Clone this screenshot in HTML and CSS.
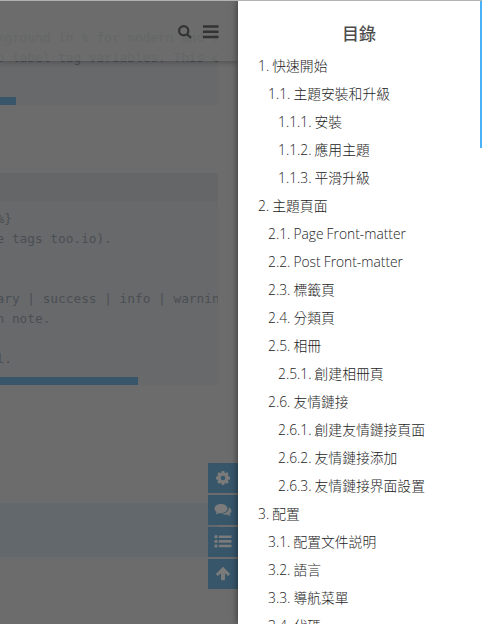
FILE: index.html
```html
<!DOCTYPE html>
<html lang="zh-Hant">
<head>
<meta charset="utf-8">
<title>目錄</title>
<link rel="stylesheet" href="styles.css">
</head>
<body>
<div class="app">
  <main class="page">
    <div class="code code-top">
      <pre>kground in % for modern and f
b label tag variables. This c</pre>
      <span class="scroll scroll-short"></span>
    </div>
    <section class="snippet">
      <div class="snippet-head"></div>
      <div class="code">
        <pre>%}
e tags too.io).


ary | success | info | warnin
n note.

l.</pre>
        <span class="scroll scroll-long"></span>
      </div>
    </section>
    <div class="quote"></div>
    <header class="nav">
      <svg class="search" viewBox="0 0 14 14"><circle cx="5.7" cy="5.7" r="4.6"/><path d="M9 9l4 4"/></svg>
      <svg class="bars" viewBox="0 0 16 14"><path d="M0 1.500h15.500M0 6.800h15.500M0 12h15.500"/></svg>
    </header>
    <div class="tools">
      <div class="tool"><svg viewBox="0 0 16 16"><circle cx="8" cy="8" r="4" fill="none" stroke="currentColor" stroke-width="3.4"/><path d="M8 1v3M8 12v3M1 8h3M12 8h3M3.100 3.100l2 2M10.900 10.900l2 2M12.900 3.100l-2 2M5.100 10.900l-2 2" stroke="currentColor" stroke-width="2.8"/></svg></div>
      <div class="tool"><svg class="wide" viewBox="0 0 18 16"><path d="M7 2c3.700 0 6.400 2 6.400 4.600S10.700 11.200 7 11.200c-.7 0-1.300-.1-1.900-.2C4 11.800 2.700 12.200 1.300 12.300c.7-.7 1.100-1.300 1.300-2.200C1.200 9.200.5 8 .5 6.600.5 4 3.300 2 7 2z"/><path d="M14.500 5.200c1.800.7 2.900 2 2.900 3.500 0 1.200-.7 2.300-1.900 3 .2.900.6 1.500 1.300 2.200-1.500-.1-2.700-.5-3.800-1.300-2.200.4-4.200 0-5.600-1 4 .2 7.200-1.900 7.200-5 0-.5 0-.9-.1-1.400z"/></svg></div>
      <div class="tool"><svg class="wide" viewBox="0 0 18 16"><path d="M4.800 1.500h12.700v2.600H4.800zM4.800 6.100h12.700v2.600H4.800zM4.800 10.700h12.700v2.600H4.800z"/><circle cx="2" cy="2.800" r="1.700"/><circle cx="2" cy="7.400" r="1.700"/><circle cx="2" cy="12" r="1.700"/></svg></div>
      <div class="tool"><svg viewBox="0 0 16 16"><path d="M8 .8l7.200 7.200-2 2-3.200-2.800V13.200q0 1-1 1H7q-1 0-1-1V7.200L2.800 10l-2-2z"/></svg></div>
    </div>
  </main>
  <aside class="toc">
    <h1 class="toc-title">目錄</h1>
    <ol class="toc-list">
      <li>1. 快速開始</li>
      <li class="l2">1.1. 主題安裝和升級</li>
      <li class="l3">1.1.1. 安裝</li>
      <li class="l3">1.1.2. 應用主題</li>
      <li class="l3">1.1.3. 平滑升級</li>
      <li>2. 主題頁面</li>
      <li class="l2">2.1. Page Front-matter</li>
      <li class="l2">2.2. Post Front-matter</li>
      <li class="l2">2.3. 標籤頁</li>
      <li class="l2">2.4. 分類頁</li>
      <li class="l2">2.5. 相冊</li>
      <li class="l3">2.5.1. 創建相冊頁</li>
      <li class="l2">2.6. 友情鏈接</li>
      <li class="l3">2.6.1. 創建友情鏈接頁面</li>
      <li class="l3">2.6.2. 友情鏈接添加</li>
      <li class="l3">2.6.3. 友情鏈接界面設置</li>
      <li>3. 配置</li>
      <li class="l2">3.1. 配置文件説明</li>
      <li class="l2">3.2. 語言</li>
      <li class="l2">3.3. 導航菜單</li>
      <li class="l2">3.4. 代碼</li>
    </ol>
    <div class="progress"></div>
  </aside>
</div>
</body>
</html>
```
FILE: styles.css
```css
* { box-sizing: border-box; }
body { margin: 0; }
.app {
  display: flex;
  width: 482px;
  height: 624px;
  overflow: hidden;
  border-top: 1px solid #b2b2b2;
  font-family: "Open Sans", "Noto Sans CJK TC", sans-serif;
}
.page {
  position: relative;
  width: 238px;
  height: 623px;
  padding-right: 20px;
  overflow: hidden;
  background: #6c6c6c;
}
.code {
  position: relative;
  height: 184px;
  padding-top: 8px;
  overflow: hidden;
  background: #68696b;
  color: #4a4f53;
}
.code pre {
  margin: 0 0 0 -3.5px;
  font: 12.79px/20px "DejaVu Sans Mono", monospace;
}
.code-top { height: 104px; padding-top: 27px; }
.scroll {
  position: absolute;
  left: 0;
  bottom: 0;
  height: 8px;
  background: #37566a;
}
.scroll-short { width: 16px; }
.scroll-long { width: 138px; }
.snippet { margin-top: 68px; }
.snippet-head { height: 28px; background: #656667; }
.quote { height: 54px; margin-top: 118px; background: #63686c; }
.nav {
  position: absolute;
  top: 0;
  left: 0;
  width: 238px;
  height: 60px;
  padding: 23px 20px 0 0;
  display: flex;
  justify-content: flex-end;
  gap: 11px;
  background: rgba(107, 109, 107, .8);
  box-shadow: 0 2px 5px rgba(0, 0, 0, .22);
}
.nav svg { fill: none; stroke: #333; }
.search { width: 14px; height: 14px; margin-top: 1px; stroke-width: 2.2; }
.bars { width: 16px; height: 14px; margin: 1px -1px 0 0; stroke-width: 2.6; }
.tools {
  position: absolute;
  right: 0;
  bottom: 35px;
  display: flex;
  flex-direction: column;
  gap: 2px;
}
.tool {
  display: flex;
  align-items: center;
  justify-content: center;
  width: 30px;
  height: 30px;
  background: #37566a;
  color: #7b7b7b;
}
.tool svg { width: 16px; height: 16px; fill: currentColor; }
.tool .wide { width: 18px; }
.toc {
  position: relative;
  width: 244px;
  height: 623px;
  background: #fff;
  box-shadow: 0 0 7px rgba(0, 0, 0, .55);
  color: #4c4c4c;
}
.toc-title {
  margin: 0;
  padding: 19px 2px 0 0;
  height: 51px;
  font-size: 17px;
  line-height: 28px;
  font-weight: 500;
  text-align: center;
}
.toc-list {
  margin: 0;
  padding: 0 0 0 20px;
  list-style: none;
  font-size: 13.8px;
  font-weight: 300;
  line-height: 28px;
  color: #1c1c1c;
  white-space: nowrap;
  word-spacing: -.5px;
}
.toc-list li { height: 28px; }
.l2 { padding-left: 10px; }
.l3 { padding-left: 20px; }
.progress {
  position: absolute;
  top: 0;
  right: 0;
  width: 2px;
  height: 147px;
  background: #49b1f5;
}
```
